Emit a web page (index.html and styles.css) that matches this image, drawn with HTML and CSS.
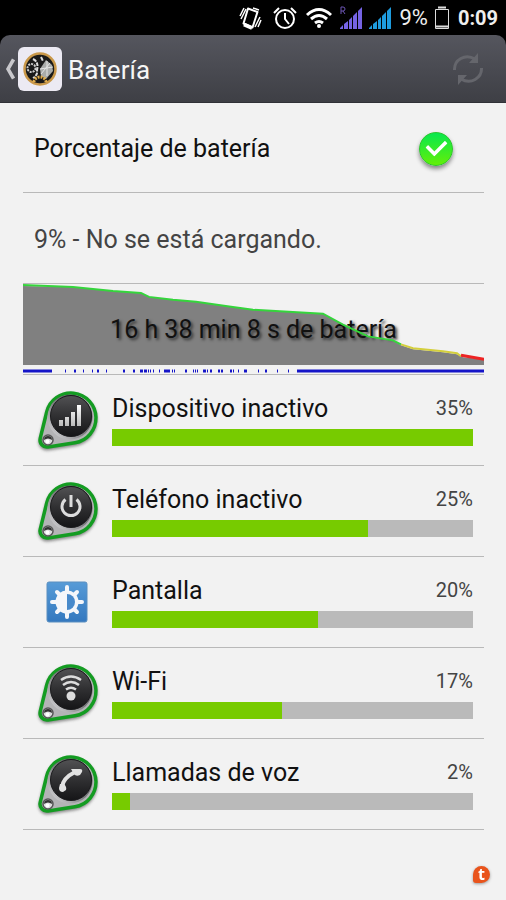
FILE: index.html
```html
<!DOCTYPE html>
<html lang="es">
<head>
<meta charset="utf-8">
<meta name="viewport" content="width=device-width, initial-scale=1">
<title>Batería</title>
<link rel="stylesheet" href="styles.css">
</head>
<body>
<svg class="defs" aria-hidden="true">
  <defs>
    <linearGradient id="disc" x1="0" y1="0" x2="0" y2="1"><stop offset="0" stop-color="#525254"/><stop offset=".5" stop-color="#303032"/><stop offset="1" stop-color="#151517"/></linearGradient>
    <linearGradient id="metal" x1="1" y1="0" x2="0" y2="1"><stop offset="0" stop-color="#3c3c40"/><stop offset=".5" stop-color="#77777a"/><stop offset="1" stop-color="#e4e4e6"/></linearGradient>
    <linearGradient id="glyph" x1="0" y1="0" x2="0" y2="1"><stop offset="0" stop-color="#fff"/><stop offset="1" stop-color="#bbb"/></linearGradient>
    <filter id="soft" x="-20%" y="-20%" width="140%" height="140%"><feGaussianBlur stdDeviation="1.5"/></filter>
    <symbol id="badge" viewBox="0 0 64 64" overflow="visible">
      <path d="M7.200 50.300 13.700 24A25 25 0 1 1 41.900 54.700L15.100 58.900A7 7 0 0 1 7.200 50.300Z" fill="#444" stroke="#444" stroke-width="3" opacity=".6" transform="translate(0 2)" filter="url(#soft)"/>
      <path d="M7.200 50.300 13.700 24A25 25 0 1 1 41.900 54.700L15.100 58.900A7 7 0 0 1 7.200 50.300Z" fill="#b4b4b6" stroke="#149c22" stroke-width="3.500"/>
      <circle cx="37" cy="29" r="22.500" fill="url(#metal)"/>
      <circle cx="38" cy="28" r="20.500" fill="url(#disc)" stroke="#1a1a1c"/>
      <circle cx="15" cy="52" r="5" fill="#dcdcde" stroke="#555" stroke-width="1.500"/>
      <path d="M11 52a4 4 0 0 1 8 0q-4-3-8 0z" fill="#333"/>
      <circle cx="14.500" cy="53.500" r="2" fill="#fff"/>
    </symbol>
  </defs>
</svg>

<div class="status">
  <svg class="s-vibrate" viewBox="0 0 24 24" fill="none" stroke="#fff"><path d="M9 2.500 18.500 6 13.500 21.500 4.500 17.500Z" stroke-width="2" stroke-linejoin="round"/><path d="M5 18.500 13 22" stroke-width="4"/><path d="M1 10 5 2M2 13 7 3M16 21 21 11M19 21 22 14M14 2 20 4" stroke-width="1.500"/></svg>
  <svg class="s-alarm" viewBox="0 0 24 24" fill="none" stroke="#fff" stroke-width="2"><circle cx="12" cy="13" r="9"/><path d="M12 7v6l4 5M1 7 6 2M23 7 18 2" /></svg>
  <svg class="s-wifi" viewBox="0 0 28 22" fill="none" stroke="#fff" stroke-width="3"><path d="M2 8Q14-3 26 8M6 12Q14 5 22 12M10 16Q14 13 18 16"/><circle cx="14" cy="19" r="2" fill="#fff" stroke="none"/></svg>
  <svg class="s-signal" viewBox="0 0 24 24" fill="#7563e4"><path d="M1 23v-1l3-3v4zM5 23v-5l4-3v8zM10 23v-9l3-3v12zM14 23V10l4-4v17zM19 23V5l4-4v22z"/><path d="M2 8V1h2a2 2 0 0 1 0 4H2M4 5l2 3" fill="none" stroke="#6c55b5"/></svg>
  <svg class="s-signal" viewBox="0 0 24 24" fill="#1e9bdd"><path d="M1 23v-1l3-3v4zM5 23v-5l4-3v8zM10 23v-9l3-3v12zM14 23V10l4-4v17zM19 23V5l4-4v22z"/></svg>
  <span class="level">9%</span>
  <svg class="s-battery" viewBox="0 0 16 24" fill="none" stroke="#ddd"><path d="M1.500 3.500h13v19h-13z"/><path d="M4 1.500h8M2 20.500h12" stroke-width="2"/></svg>
  <time class="clock">0:09</time>
</div>

<header class="bar">
  <a class="up" href="#" aria-label="Atrás">
    <svg class="chevron" viewBox="0 0 10 22"><path d="M8.500 1.500 3 11 8.500 20.500" fill="none" stroke="#c8c8cc" stroke-width="3.500"/></svg>
    <svg class="app" viewBox="0 0 44 44">
      <rect width="44" height="44" rx="6" fill="#eceaf3"/>
      <circle cx="22" cy="22" r="15.500" fill="#191919" stroke="#c9984a" stroke-width="2.500"/>
      <path d="M22 22 28 13 34 18 35 24 28 32 23 29Z" fill="#a9aba9"/><path d="m22 22 13-2M29 14v15M23 27l9-11" stroke="#e4e4e4"/>
      <circle cx="13.500" cy="21" r="4" fill="none" stroke="#ccc" stroke-width="2" stroke-dasharray="2 1"/>
      <path d="M15 12Q21 15 19 23 20 28 15 31M23 10 25 14" fill="none" stroke="#ddd" stroke-width="2" stroke-dasharray="4 1"/>
      <path d="M16 35a6 5 0 0 1 12 0" fill="none" stroke="#e0ad4d" stroke-width="3" stroke-dasharray="2 1"/>
    </svg>
  </a>
  <h1>Batería</h1>
  <button class="refresh" type="button" aria-label="Actualizar"><svg viewBox="0 0 32 32"><g fill="none" stroke="#65666c" stroke-width="3"><path d="M2.500 17C2 7 13 0 23 6"/><path d="M29.500 15C30 25 19 32 9 26"/></g><path d="M26 0v10H17zM6 32V22h9z" fill="#65666c"/></svg></button>
</header>

<main>
  <label class="setting"><span>Porcentaje de batería</span><input class="tick" type="checkbox" checked></label>
  <p class="state">9% - No se está cargando.</p>

  <section class="history">
    <p class="duration">16 h 38 min 8 s de batería</p>
    <svg class="chart" viewBox="0 0 461 91" preserveAspectRatio="none" aria-hidden="true">
      <path d="M0 2 50 3 90 7 118 9 126 13 150 16 173 18 208 23 230 26 300 30 320 41 345 53 370 57 378 62 390 66 420 69 434 71 440 74 461 76V82H0Z" fill="#808080"/>
    </svg>
    <svg class="chart line" viewBox="0 0 461 91" preserveAspectRatio="none" aria-hidden="true">
      <g fill="none" stroke-width="2"><path d="M0 1 50 3 90 7 118 9 126 13 150 16 173 18 208 23 230 26 300 30 320 41 345 53 370 57 378 61" stroke="#35d53c"/><path d="M378 61 390 65 420 68 434 70 438 73" stroke="#d4cf3d"/><path d="M438 72 461 76" stroke="#ed2424" stroke-width="3"/></g>
      <path d="M0 88H29M274 88H461" stroke="#1515c8" stroke-width="3"/>
      <path d="M42 88h1M51 88h2M60 88h1M69 88h1M74 88h2M83 88h1M100 88h2M110 88h2M117 88h3M121 88h3M125 88h1M127 88h1M130 88h1M136 88h1M141 88h6M149 88h1M151 88h1M162 88h2M170 88h1M172 88h1M174 88h1M180 88h3M184 88h1M187 88h2M195 88h2M198 88h2M207 88h2M210 88h1M215 88h1M221 88h3M235 88h1M242 88h2M254 88h1M265 88h1" stroke="#1515c8" stroke-width="3"/>
    </svg>
  </section>

  <ul class="usage">
    <li>
      <svg class="icon" viewBox="0 0 64 64"><use href="#badge"/><path d="M26 32h4v6h-4zM32 29h4v9h-4zM38 24h4v14h-4zM44 17h4v21h-4z" fill="url(#glyph)"/></svg>
      <div class="info"><span>Dispositivo inactivo</span><span class="pct">35%</span><div class="track"><div class="fill" style="width:100%"></div></div></div>
    </li>
    <li>
      <svg class="icon" viewBox="0 0 64 64"><use href="#badge"/><path d="M32.500 20.500a9 9 0 1 0 11 0M38 16v12" fill="none" stroke="#ddd" stroke-width="3"/></svg>
      <div class="info"><span>Teléfono inactivo</span><span class="pct">25%</span><div class="track"><div class="fill" style="width:71%"></div></div></div>
    </li>
    <li>
      <svg class="icon" viewBox="0 0 64 64"><defs><linearGradient id="blue" x1="0" y1="0" x2="0" y2="1"><stop stop-color="#579bd7"/><stop offset="1" stop-color="#3478bf"/></linearGradient></defs><rect x="14" y="12" width="40" height="40" rx="2" fill="url(#blue)" stroke="#5b8fc0"/><path d="M34 17v30M19 32h30M24 22l20 20M44 22 24 42" stroke="#f5f6fa" stroke-width="4" stroke-linecap="round"/><circle cx="34" cy="32" r="11.500" fill="#f5f6fa"/><path d="M34 24a8 8 0 0 1 0 16z" fill="#4889cb"/></svg>
      <div class="info"><span>Pantalla</span><span class="pct">20%</span><div class="track"><div class="fill" style="width:57%"></div></div></div>
    </li>
    <li>
      <svg class="icon" viewBox="0 0 64 64"><use href="#badge"/><g fill="none" stroke="#ddd" stroke-width="2.500"><path d="M28 19Q38 12 48 19M30 24Q38 18 46 24M33 28.500Q38 25 43 28.500"/></g><circle cx="38" cy="35" r="4.500" fill="#ddd"/></svg>
      <div class="info"><span>Wi-Fi</span><span class="pct">17%</span><div class="track"><div class="fill" style="width:47%"></div></div></div>
    </li>
    <li>
      <svg class="icon" viewBox="0 0 64 64"><use href="#badge"/><path d="M29 35Q30 26 42 20" fill="none" stroke="#e2e2e2" stroke-width="4"/><path d="M38 17 47 17Q50 17 49 20L47 23Q43 25 41 22ZM27 32 31 32Q34 35 33 38L30 40Q26 40 26 36Z" fill="#e2e2e2"/></svg>
      <div class="info"><span>Llamadas de voz</span><span class="pct">2%</span><div class="track"><div class="fill" style="width:5%"></div></div></div>
    </li>
  </ul>
</main>
<div class="watermark">t</div>
</body>
</html>
```
FILE: styles.css
```css
* { box-sizing: border-box; }
body { margin: 0; min-height: 100vh; background: #f2f2f2; color: #111; font-family: Roboto, sans-serif; }
h1, p, ul { margin: 0; padding: 0; font-weight: 400; }
svg { display: block; flex: none; }
.defs { position: absolute; width: 0; height: 0; }

.status { display: flex; align-items: center; justify-content: flex-end; height: 35px; padding: 0 8px; background: #000; color: #eee; }
.s-vibrate { width: 24px; height: 24px; margin-right: 10px; }
.s-alarm { width: 24px; height: 24px; margin-right: 8px; }
.s-wifi { width: 28px; height: 22px; margin-right: 6px; }
.s-signal { width: 24px; height: 24px; margin-right: 5px; }
.s-battery { width: 16px; height: 24px; margin: 0 8px 0 6px; }
.level { margin-left: 2px; font-size: 22px; }
.clock { font-size: 20px; font-weight: 700; }

.bar { display: flex; align-items: center; height: 68px; padding: 0 22px 0 5px; background: linear-gradient(#55565e, #3e3f45); border-bottom: 1px solid #303137; border-radius: 10px 10px 0 0; color: #f5f5f5; }
body::before { content: ""; position: absolute; z-index: -1; top: 0; left: 0; right: 0; height: 60px; background: #000; }
.up { display: flex; align-items: center; gap: 3px; margin-right: 6px; }
.chevron { width: 10px; height: 22px; }
.app { width: 44px; height: 44px; }
h1 { flex: 1; padding-top: 2px; font-size: 26px; line-height: 32px; }
.refresh { padding: 0; border: 0; background: none; }
.refresh svg { width: 32px; height: 32px; }

main { padding: 0 22px 0 23px; }
.setting, .state { display: flex; align-items: center; height: 90px; padding: 2px 31px 0 11px; border-bottom: 1px solid #b9b9b9; font-size: 25px; }
.setting { justify-content: space-between; }
.state { height: 91px; color: #444; }
.tick { appearance: none; width: 34px; height: 34px; margin: 0; border-radius: 50%; background: linear-gradient(#08e84e, #63ef08); border: 1px solid #2cc52c; box-shadow: 0 3px 4px #888; display: grid; place-items: center; }
.tick::before { content: ""; width: 15px; height: 9px; border: solid #fff; border-width: 0 0 4px 4px; border-radius: 1px; transform: translateY(-3px) rotate(-45deg); }

.history { display: grid; height: 91px; border-bottom: 1px solid #b9b9b9; }
.history > * { grid-area: 1 / 1; }
.chart { width: 100%; height: 90px; }
.duration { z-index: 1; align-self: center; padding-top: 2px; text-align: center; font-size: 25px; line-height: 32px; text-shadow: 2px 2px 3px #333; }
.line { z-index: 2; }

.usage { list-style: none; }
.usage li { display: flex; align-items: center; height: 91px; padding-right: 11px; border-bottom: 1px solid #b9b9b9; }
.icon { width: 64px; height: 64px; margin: 0 15px 0 10px; overflow: visible; }
.info { flex: 1; display: grid; grid-template-columns: 1fr auto; align-items: center; row-gap: 4px; padding-bottom: 2px; font-size: 25px; line-height: 32px; }
.pct { color: #444; font-size: 20px; line-height: 30px; align-self: start; }
.track { grid-column: 1 / -1; height: 17px; background: #bababa; }
.fill { height: 100%; background: #77cb00; }

.watermark { position: fixed; right: 16px; bottom: 17px; width: 17px; height: 17px; border-radius: 50% 50% 50% 3px; background: #e9541c; color: #fff; font: 700 16px/16px "Open Sans", sans-serif; text-align: center; box-shadow: 0 1px 3px #999; }
```
